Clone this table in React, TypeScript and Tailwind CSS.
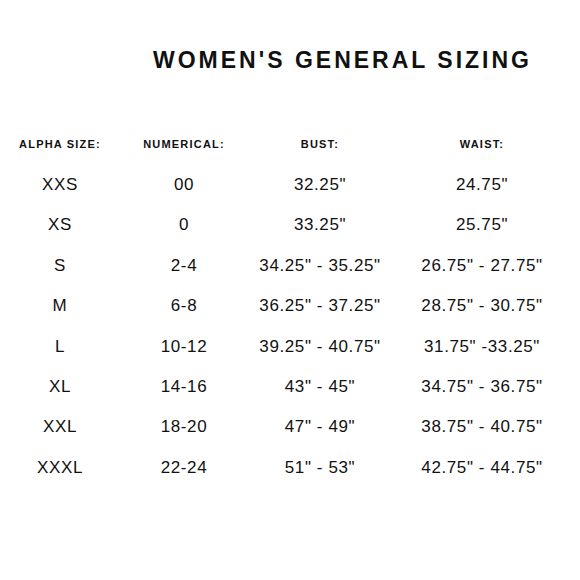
const rows = [
  ['XXS', '00', '32.25"', '24.75"'],
  ['XS', '0', '33.25"', '25.75"'],
  ['S', '2-4', '34.25" - 35.25"', '26.75" - 27.75"'],
  ['M', '6-8', '36.25" - 37.25"', '28.75" - 30.75"'],
  ['L', '10-12', '39.25" - 40.75"', '31.75" -33.25"'],
  ['XL', '14-16', '43" - 45"', '34.75" - 36.75"'],
  ['XXL', '18-20', '47" - 49"', '38.75" - 40.75"'],
  ['XXXL', '22-24', '51" - 53"', '42.75" - 44.75"'],
];

const headers = ['ALPHA SIZE:', 'NUMERICAL:', 'BUST:', 'WAIST:'];

export default function App() {
  return (
    <div className="w-[580px] h-[580px] bg-white text-[#111] font-['Liberation_Sans',Arial,sans-serif]">
      {/* Title */}
      <div className="pt-[49px] pl-[153px]">
        <h1 className="text-[23px] leading-none font-bold tracking-[3px]">WOMEN'S GENERAL SIZING</h1>
      </div>

      {/* Size table */}
      <div className="mt-[52px] grid grid-cols-[120px_128px_144px_180px] auto-rows-[40.4px]">
        {headers.map((h) => (
          <div key={h} className="flex items-center justify-center text-[11px] leading-none font-bold tracking-[1.2px]">
            {h}
          </div>
        ))}
        {rows.map((row) =>
          row.map((cell, i) => (
            <div key={row[0] + i} className="flex items-center justify-center text-[17px] leading-none tracking-[0.6px] whitespace-pre">
              {cell}
            </div>
          ))
        )}
      </div>
    </div>
  );
}
